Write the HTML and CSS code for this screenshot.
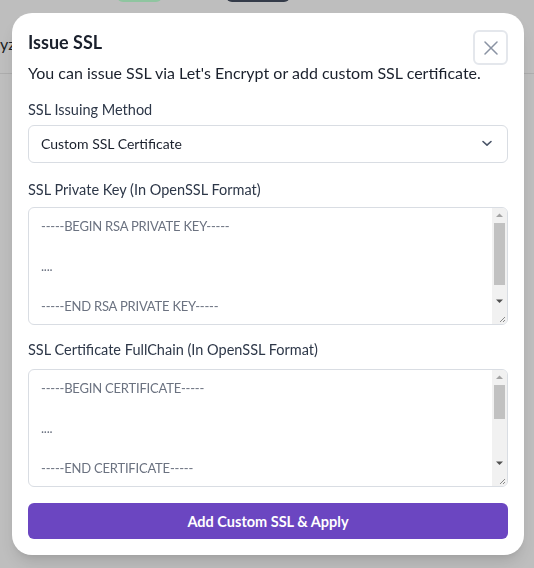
FILE: index.html
```html
<!DOCTYPE html>
<html lang="en">
<head>
<meta charset="utf-8">
<title>Issue SSL</title>
<link rel="stylesheet" href="styles.css">
</head>
<body>
<div class="page">
  <div class="toolbar">
    <span class="pill pill-green"></span>
    <span class="pill pill-dark"></span>
  </div>
  <div class="row">
    <span class="crumb">yz</span>
  </div>
</div>

<div class="modal" role="dialog" aria-labelledby="modal-title">
  <h2 class="modal-title" id="modal-title">Issue SSL</h2>
  <button class="close-btn" aria-label="Close">
    <svg width="14" height="14" viewBox="0 0 14 14"><path d="M1 1L13 13M13 1L1 13" stroke="#8a93a3" stroke-width="1.5" stroke-linecap="round" fill="none"/></svg>
  </button>
  <p class="modal-desc">You can issue SSL via Let's Encrypt or add custom SSL certificate.</p>

  <div class="form">
    <label class="label label-1">SSL Issuing Method</label>
    <div class="select">
      <span class="select-value">Custom SSL Certificate</span>
      <svg width="12" height="12" viewBox="0 0 12 12"><path d="M2 4.5L6 8.2L10 4.5" stroke="#4a5568" stroke-width="1.6" fill="none" stroke-linecap="round" stroke-linejoin="round"/></svg>
    </div>

    <label class="label label-2">SSL Private Key (In OpenSSL Format)</label>
    <div class="area-box">
      <textarea class="textarea">-----BEGIN RSA PRIVATE KEY-----

....

-----END RSA PRIVATE KEY-----
</textarea>
      <div class="scrollbar">
        <div class="sb-btn"><svg width="15" height="14" viewBox="0 0 15 14"><path d="M4 9L7.5 5.5L11 9Z" fill="#a3a3a3"/></svg></div>
        <div class="sb-track"><div class="sb-thumb thumb-1"></div></div>
        <div class="sb-btn"><svg width="15" height="14" viewBox="0 0 15 14"><path d="M4 4.5H11L7.5 8Z" fill="#505050"/></svg></div>
        <div class="sb-corner"><svg width="15" height="15" viewBox="0 0 15 15"><path d="M13 8L8 13M13 11L11 13" stroke="#8a8a8a" stroke-width="1"/></svg></div>
      </div>
    </div>

    <label class="label label-3">SSL Certificate FullChain (In OpenSSL Format)</label>
    <div class="area-box">
      <textarea class="textarea">-----BEGIN CERTIFICATE-----

....

-----END CERTIFICATE-----

-----BEGIN CERTIFICATE-----

....

-----END CERTIFICATE-----
</textarea>
      <div class="scrollbar">
        <div class="sb-btn"><svg width="15" height="14" viewBox="0 0 15 14"><path d="M4 9L7.5 5.5L11 9Z" fill="#a3a3a3"/></svg></div>
        <div class="sb-track"><div class="sb-thumb thumb-2"></div></div>
        <div class="sb-btn"><svg width="15" height="14" viewBox="0 0 15 14"><path d="M4 4.5H11L7.5 8Z" fill="#505050"/></svg></div>
        <div class="sb-corner"><svg width="15" height="15" viewBox="0 0 15 15"><path d="M13 8L8 13M13 11L11 13" stroke="#8a8a8a" stroke-width="1"/></svg></div>
      </div>
    </div>

    <button class="submit">Add Custom SSL &amp; Apply</button>
  </div>
</div>
</body>
</html>
```

FILE: styles.css
```css
* { box-sizing: border-box; }

html, body {
  margin: 0;
  padding: 0;
  height: 100%;
}

body {
  background: #bebebe;
  font-family: Lato, "Noto Sans", sans-serif;
  color: #1a202c;
  overflow: hidden;
}

.page {
  height: 100%;
}

.toolbar {
  display: flex;
  margin-top: -30px;
  padding-left: 117px;
  gap: 64px;
}

.pill {
  display: block;
  height: 32px;
  border-radius: 6px;
}

.pill-green {
  width: 45px;
  background: #8fc5a0;
}

.pill-dark {
  width: 64px;
  background: #343b49;
}

.row {
  height: 72px;
  border-bottom: 1px solid #adadad;
  display: flex;
  align-items: center;
  padding-top: 12px;
}

.crumb {
  font-size: 16px;
  color: #1c1f24;
  white-space: nowrap;
}

.modal {
  position: fixed;
  left: 12px;
  top: 13px;
  width: 512px;
  background: #ffffff;
  border-radius: 20px;
  padding: 16px;
  box-shadow: 0 10px 15px -3px rgba(0,0,0,0.12), 0 4px 6px -2px rgba(0,0,0,0.06);
}

.modal-title {
  margin: 0;
  font-size: 18px;
  line-height: 27px;
  font-weight: 700;
  color: #1a202c;
}

.close-btn {
  position: absolute;
  top: 17px;
  right: 16px;
  width: 35px;
  height: 35px;
  border: 2px solid #e4e7ec;
  border-radius: 6px;
  background: #ffffff;
  display: flex;
  align-items: center;
  justify-content: center;
  padding: 0;
}

.modal-desc {
  margin: 5px 0 0;
  font-size: 16px;
  line-height: 24px;
  color: #1a202c;
}

.form {
  margin-top: 15px;
  display: flex;
  flex-direction: column;
}

.label {
  display: block;
  font-size: 14.5px;
  line-height: 20px;
  color: #2d3748;
}

.label-1 { margin-bottom: 5px; }
.label-2 { margin-top: 17px; margin-bottom: 7px; }
.label-3 { margin-top: 15px; margin-bottom: 9px; }

.select {
  height: 38px;
  border: 1px solid #d9dde3;
  border-radius: 6px;
  display: flex;
  align-items: center;
  justify-content: space-between;
  padding: 0 14px 2px 12px;
  font-size: 14px;
  color: #1a202c;
}

.area-box {
  display: flex;
  height: 118px;
  border: 1px solid #d9dde3;
  border-radius: 6px;
  overflow: hidden;
  background: #ffffff;
}

.textarea {
  display: block;
  flex: 1;
  min-width: 0;
  height: 100%;
  border: none;
  outline: none;
  padding: 8px 12px;
  font-family: Lato, "Noto Sans", sans-serif;
  font-size: 13px;
  letter-spacing: -0.2px;
  line-height: 20px;
  color: #6b7280;
  resize: none;
  overflow: hidden;
  margin: 0;
  background: transparent;
}

.scrollbar {
  width: 15px;
  flex: none;
  display: flex;
  flex-direction: column;
  background: #f1f1f1;
}

.sb-btn {
  height: 14px;
  flex: none;
}

.sb-btn svg,
.sb-corner svg {
  display: block;
}

.sb-track {
  flex: 1;
  padding: 1px 2px 0;
}

.sb-thumb {
  background: #c1c1c1;
}

.thumb-1 { height: 62px; }
.thumb-2 { height: 34px; }

.sb-corner {
  height: 15px;
  flex: none;
}

.submit {
  margin-top: 16px;
  height: 36px;
  border: none;
  border-radius: 6px;
  background: #6b46c1;
  color: #ffffff;
  font-family: Lato, "Noto Sans", sans-serif;
  font-size: 14.5px;
  font-weight: 700;
  cursor: pointer;
}
```
